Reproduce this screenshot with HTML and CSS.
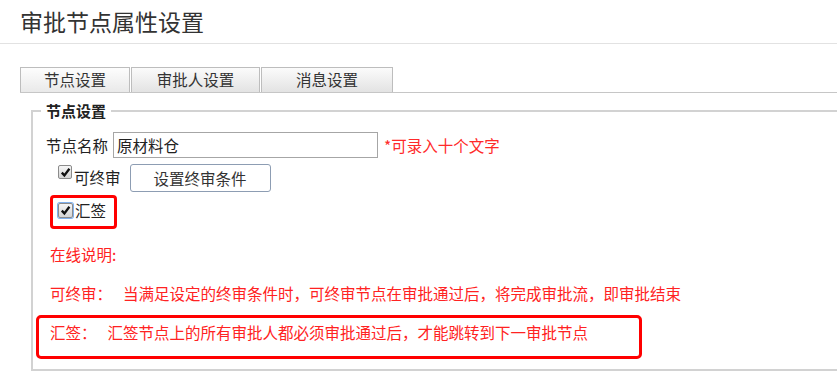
FILE: index.html
```html
<!DOCTYPE html>
<html lang="zh-CN">
<head>
  <meta charset="UTF-8">
  <title>审批节点属性设置</title>
  <link rel="stylesheet" href="styles.css">
</head>
<body>
  <h1 class="page-title">审批节点属性设置</h1>

  <div class="tabs">
    <a class="tab tab-node active">节点设置</a>
    <a class="tab tab-user">审批人设置</a>
    <a class="tab tab-msg">消息设置</a>
  </div>

  <fieldset class="node-box">
    <legend>节点设置</legend>

    <div class="row name-row">
      <span class="field-label">节点名称</span>
      <input class="name-input" type="text" value="原材料仓">
      <span class="hint">*可录入十个文字</span>
    </div>

    <div class="row end-row">
      <label class="check">
        <span class="box"><svg width="11" height="11" viewBox="0 0 11 11"><path d="M1.8 5.6 L4.4 8.4 L9.4 1.8" fill="none" stroke="#111" stroke-width="2.3"/></svg></span>可终审
      </label>
      <button class="set-btn" type="button">设置终审条件</button>
    </div>

    <div class="row sum-row">
      <label class="check mark-box">
        <span class="box focus"><svg width="11" height="11" viewBox="0 0 11 11"><path d="M1.8 5.6 L4.4 8.4 L9.4 1.8" fill="none" stroke="#111" stroke-width="2.3"/></svg></span>汇签
      </label>
    </div>

    <p class="note online">在线说明:</p>
    <p class="note end-note"><span class="term">可终审：</span>当满足设定的终审条件时，可终审节点在审批通过后，将完成审批流，即审批结束</p>
    <p class="note sum-note"><span class="term">汇签：</span>汇签节点上的所有审批人都必须审批通过后，才能跳转到下一审批节点</p>
  </fieldset>
</body>
</html>
```

FILE: styles.css
```css
body {
  margin: 0;
  font-family: "Noto Sans CJK SC", "Liberation Sans", sans-serif;
  font-size: 15.5px;
  color: #222;
  background-color: #fff;
}

.page-title {
  margin: 0;
  height: 43px;
  line-height: 43px;
  padding-left: 20px;
  font-size: 23px;
  font-weight: normal;
  color: #333;
  border-bottom: 1px solid #e2e2e2;
}

.tabs {
  display: flex;
  height: 25px;
  margin: 23px 0 0 20px;
  border-bottom: 1px solid #c6c6c6;
}

.tab {
  box-sizing: border-box;
  height: 25px;
  line-height: 23px;
  margin-right: 1px;
  border: 1px solid #bdbdbd;
  border-bottom: 0;
  background: linear-gradient(#fbfbfb, #e3e3e3);
  text-align: center;
  color: #333;
}

.tab.active {
  background: linear-gradient(#fdfdfd, #e9e9e9);
}

.tab-node { width: 110px; }
.tab-user { width: 129px; }
.tab-msg  { width: 132px; }

.node-box {
  margin: 9px 0 0 31px;
  padding: 0 0 10px 13px;
  border: 2px solid #d2d2d2;
  border-right: 0;
  min-width: 0;
}

.node-box legend {
  font-size: 15px;
  font-weight: bold;
  line-height: 18px;
  padding: 0 5px;
  margin-left: -5px;
  color: #222;
}

.row {
  display: flex;
  align-items: center;
}

.name-row {
  margin-top: 12px;
}

.field-label {
  margin-right: 5px;
}

.name-input {
  box-sizing: border-box;
  width: 265px;
  height: 26px;
  margin: 0;
  padding: 0 3px;
  border: 1px solid #a6a6a6;
  font: inherit;
  color: #222;
}

.hint {
  margin-left: 6px;
  color: #ff2a2a;
}

.end-row {
  margin-top: 6px;
  padding-left: 12px;
  align-items: flex-start;
}

.check {
  display: flex;
  align-items: center;
  line-height: 26px;
}

.end-row .check {
  align-items: flex-start;
}

.end-row .box {
  margin-top: 1px;
}

.box {
  box-sizing: border-box;
  width: 14px;
  height: 14px;
  margin-right: 2px;
  border: 1px solid #8b8b8b;
  border-radius: 2px;
  background: linear-gradient(#f6f6f6, #d4d4d4);
  display: flex;
  align-items: center;
  justify-content: center;
}

.box.focus {
  width: 15px;
  height: 15px;
  box-shadow: 0 0 0 1px #7fb0ee;
}

.set-btn {
  box-sizing: border-box;
  width: 141px;
  height: 28px;
  margin-left: 9px;
  padding: 0;
  border: 1px solid #8d9db3;
  border-radius: 3px;
  background-color: #fff;
  font: inherit;
  color: #333;
}

.sum-row {
  margin: 3px 0 0 4px;
}

.mark-box {
  line-height: 16px;
  padding: 4px 8px 8px 5px;
  border: 3px solid #f00;
  border-radius: 4px;
}

.note {
  margin: 0;
  padding-left: 4px;
  line-height: 20px;
  color: #ff2222;
}

.online {
  margin-top: 15px;
}

.end-note {
  margin-top: 19px;
}

.term {
  margin-right: 11px;
}

.sum-note {
  box-sizing: border-box;
  width: 606px;
  margin: 12px 0 0 -10px;
  padding: 4px 0 14px 11px;
  border: 3px solid #f00;
  border-radius: 5px;
}
```
